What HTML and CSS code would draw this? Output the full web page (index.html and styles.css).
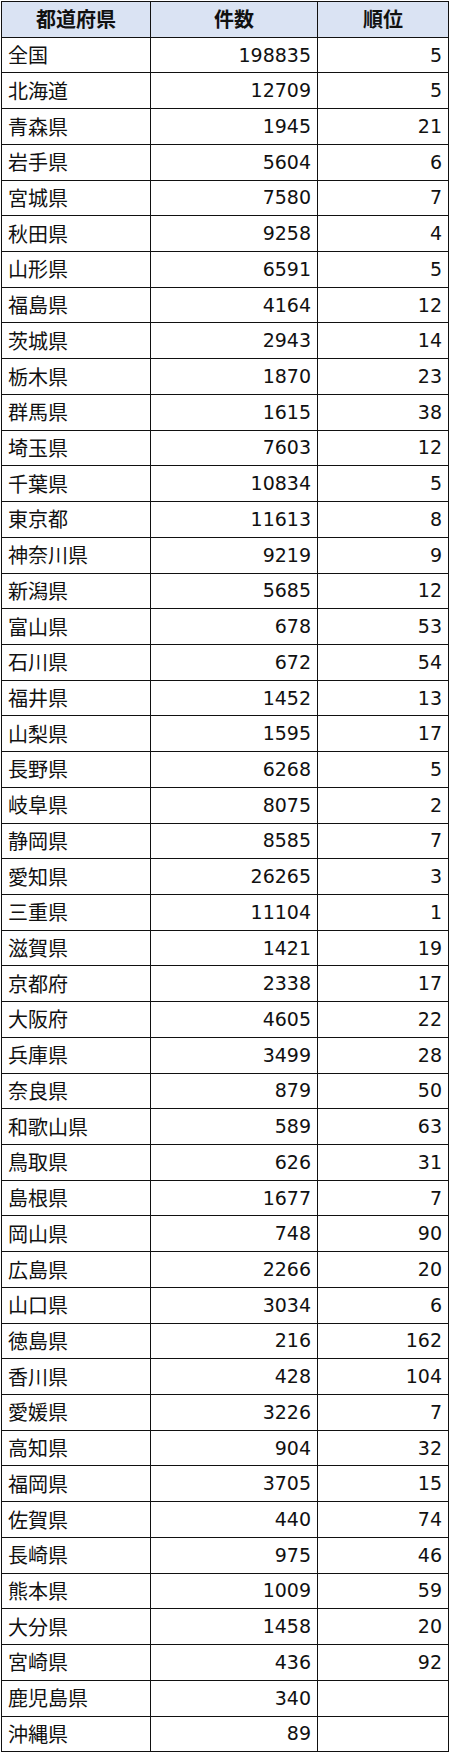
FILE: index.html
```html
<!DOCTYPE html>
<html lang="ja">
<head>
<meta charset="utf-8">
<link rel="stylesheet" href="styles.css">
</head>
<body>
<table class="tbl">
<colgroup><col class="c1"><col class="c2"><col class="c3"></colgroup>
<thead>
<tr><th>都道府県</th><th>件数</th><th>順位</th></tr>
</thead>
<tbody>
<tr><td>全国</td><td class="n">198835</td><td class="n">5</td></tr>
<tr><td>北海道</td><td class="n">12709</td><td class="n">5</td></tr>
<tr><td>青森県</td><td class="n">1945</td><td class="n">21</td></tr>
<tr><td>岩手県</td><td class="n">5604</td><td class="n">6</td></tr>
<tr><td>宮城県</td><td class="n">7580</td><td class="n">7</td></tr>
<tr><td>秋田県</td><td class="n">9258</td><td class="n">4</td></tr>
<tr><td>山形県</td><td class="n">6591</td><td class="n">5</td></tr>
<tr><td>福島県</td><td class="n">4164</td><td class="n">12</td></tr>
<tr><td>茨城県</td><td class="n">2943</td><td class="n">14</td></tr>
<tr><td>栃木県</td><td class="n">1870</td><td class="n">23</td></tr>
<tr><td>群馬県</td><td class="n">1615</td><td class="n">38</td></tr>
<tr><td>埼玉県</td><td class="n">7603</td><td class="n">12</td></tr>
<tr><td>千葉県</td><td class="n">10834</td><td class="n">5</td></tr>
<tr><td>東京都</td><td class="n">11613</td><td class="n">8</td></tr>
<tr><td>神奈川県</td><td class="n">9219</td><td class="n">9</td></tr>
<tr><td>新潟県</td><td class="n">5685</td><td class="n">12</td></tr>
<tr><td>富山県</td><td class="n">678</td><td class="n">53</td></tr>
<tr><td>石川県</td><td class="n">672</td><td class="n">54</td></tr>
<tr><td>福井県</td><td class="n">1452</td><td class="n">13</td></tr>
<tr><td>山梨県</td><td class="n">1595</td><td class="n">17</td></tr>
<tr><td>長野県</td><td class="n">6268</td><td class="n">5</td></tr>
<tr><td>岐阜県</td><td class="n">8075</td><td class="n">2</td></tr>
<tr><td>静岡県</td><td class="n">8585</td><td class="n">7</td></tr>
<tr><td>愛知県</td><td class="n">26265</td><td class="n">3</td></tr>
<tr><td>三重県</td><td class="n">11104</td><td class="n">1</td></tr>
<tr><td>滋賀県</td><td class="n">1421</td><td class="n">19</td></tr>
<tr><td>京都府</td><td class="n">2338</td><td class="n">17</td></tr>
<tr><td>大阪府</td><td class="n">4605</td><td class="n">22</td></tr>
<tr><td>兵庫県</td><td class="n">3499</td><td class="n">28</td></tr>
<tr><td>奈良県</td><td class="n">879</td><td class="n">50</td></tr>
<tr><td>和歌山県</td><td class="n">589</td><td class="n">63</td></tr>
<tr><td>鳥取県</td><td class="n">626</td><td class="n">31</td></tr>
<tr><td>島根県</td><td class="n">1677</td><td class="n">7</td></tr>
<tr><td>岡山県</td><td class="n">748</td><td class="n">90</td></tr>
<tr><td>広島県</td><td class="n">2266</td><td class="n">20</td></tr>
<tr><td>山口県</td><td class="n">3034</td><td class="n">6</td></tr>
<tr><td>徳島県</td><td class="n">216</td><td class="n">162</td></tr>
<tr><td>香川県</td><td class="n">428</td><td class="n">104</td></tr>
<tr><td>愛媛県</td><td class="n">3226</td><td class="n">7</td></tr>
<tr><td>高知県</td><td class="n">904</td><td class="n">32</td></tr>
<tr><td>福岡県</td><td class="n">3705</td><td class="n">15</td></tr>
<tr><td>佐賀県</td><td class="n">440</td><td class="n">74</td></tr>
<tr><td>長崎県</td><td class="n">975</td><td class="n">46</td></tr>
<tr><td>熊本県</td><td class="n">1009</td><td class="n">59</td></tr>
<tr><td>大分県</td><td class="n">1458</td><td class="n">20</td></tr>
<tr><td>宮崎県</td><td class="n">436</td><td class="n">92</td></tr>
<tr><td>鹿児島県</td><td class="n">340</td><td class="n"></td></tr>
<tr><td>沖縄県</td><td class="n">89</td><td class="n"></td></tr>
</tbody>
</table>
</body>
</html>
```
FILE: styles.css
```css
html, body {
  margin: 0;
  padding: 0;
  background: #ffffff;
}
body {
  padding: 1px 0 0 1px;
}
.tbl {
  border-collapse: collapse;
  table-layout: fixed;
  width: 447px;
  font-family: "DejaVu Sans", "Noto Sans CJK JP", sans-serif;
  font-size: 19px;
  color: #111;
}
.c1 { width: 149px; }
.c2 { width: 167px; }
.c3 { width: 131px; }
.tbl tr {
  height: 35.73px;
}
.tbl th, .tbl td {
  border: 1px solid #111;
  padding: 0 6px;
  vertical-align: middle;
  line-height: 1;
  white-space: nowrap;
}
.tbl th {
  background: #dae3f3;
  font-family: "Noto Sans CJK JP", sans-serif;
  font-size: 20px;
  font-weight: bold;
  text-align: center;
}
.tbl td {
  text-align: left;
}
.tbl td:first-child {
  font-family: "Noto Sans CJK JP", sans-serif;
  font-size: 20px;
  padding-left: 6px;
}
.tbl td.n {
  text-align: right;
}
```
